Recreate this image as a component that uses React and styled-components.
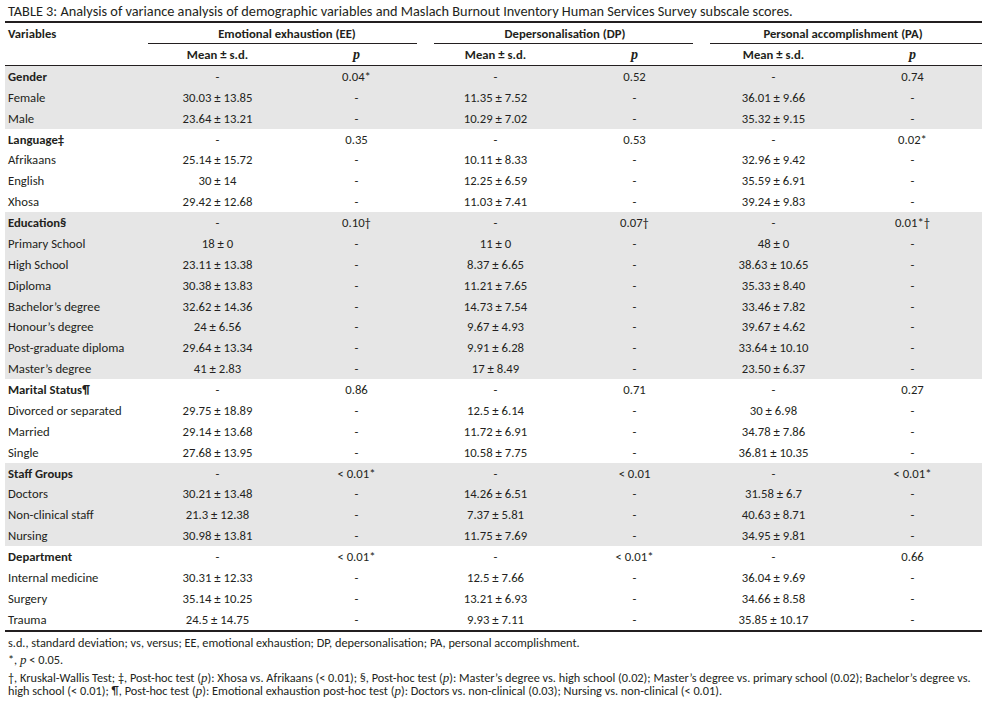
import styled, { createGlobalStyle } from 'styled-components';

const Global = createGlobalStyle`
  body {
    margin: 0;
    background: #fff;
    color: #231f20;
    font-family: Carlito, Lato, "Liberation Sans", sans-serif;
  }
`;

const COLS = '143px repeat(6, 139px)';

const Page = styled.div`
  width: 977px;
  margin-left: 5px;
  padding-top: 3px;
`;

const Title = styled.div`
  font-size: 14.3px;
  line-height: 17px;
  padding-left: 3px;
  padding-bottom: 1px;
  border-bottom: 2.5px solid #231f20;
  white-space: nowrap;
`;

const Row = styled.div`
  display: grid;
  grid-template-columns: ${COLS};
  height: ${(p) => p.h || 20.88}px;
  align-items: center;
  font-size: 12.7px;
  background: ${(p) => (p.shade ? '#e6e6e6' : 'transparent')};
  border-bottom: ${(p) => (p.rule ? '1px solid #231f20' : 'none')};
`;

const Cell = styled.div`
  text-align: ${(p) => (p.left ? 'left' : 'center')};
  padding-left: ${(p) => (p.left ? '3px' : '0')};
  font-weight: ${(p) => (p.bold ? 700 : 400)};
  white-space: nowrap;
`;

const GroupHead = styled.div`
  grid-column: span 2;
  align-self: stretch;
  display: flex;
  align-items: center;
  justify-content: center;
  font-weight: 700;
  position: relative;
  &::after {
    content: '';
    position: absolute;
    left: ${(p) => p.inL}px;
    right: ${(p) => p.inR}px;
    bottom: 0;
    border-bottom: 1px solid #231f20;
  }
`;

const PItalic = styled.span`
  font-family: "Liberation Serif", serif;
  font-style: italic;
  font-weight: 700;
  font-size: 14px;
`;

const Body = styled.div`
  border-bottom: 2.5px solid #231f20;
`;

const Notes = styled.div`
  font-size: 12.3px;
  padding: 4px 0 0 3px;
`;

const Note = styled.p`
  margin: 0 0 ${(p) => p.gap || 3}px;
  line-height: ${(p) => p.lh || 14}px;
`;

const Ip = styled.span`
  font-family: "Liberation Serif", serif;
  font-style: italic;
  font-size: 13px;
  line-height: 1;
`;

const groups = [
  {
    label: 'Gender',
    shade: true,
    p: ['0.04*', '0.52', '0.74'],
    rows: [
      ['Female', '30.03 ± 13.85', '11.35 ± 7.52', '36.01 ± 9.66'],
      ['Male', '23.64 ± 13.21', '10.29 ± 7.02', '35.32 ± 9.15'],
    ],
  },
  {
    label: 'Language‡',
    p: ['0.35', '0.53', '0.02*'],
    rows: [
      ['Afrikaans', '25.14 ± 15.72', '10.11 ± 8.33', '32.96 ± 9.42'],
      ['English', '30 ± 14', '12.25 ± 6.59', '35.59 ± 6.91'],
      ['Xhosa', '29.42 ± 12.68', '11.03 ± 7.41', '39.24 ± 9.83'],
    ],
  },
  {
    label: 'Education§',
    shade: true,
    p: ['0.10†', '0.07†', '0.01*†'],
    rows: [
      ['Primary School', '18 ± 0', '11 ± 0', '48 ± 0'],
      ['High School', '23.11 ± 13.38', '8.37 ± 6.65', '38.63 ± 10.65'],
      ['Diploma', '30.38 ± 13.83', '11.21 ± 7.65', '35.33 ± 8.40'],
      ['Bachelor’s degree', '32.62 ± 14.36', '14.73 ± 7.54', '33.46 ± 7.82'],
      ['Honour’s degree', '24 ± 6.56', '9.67 ± 4.93', '39.67 ± 4.62'],
      ['Post-graduate diploma', '29.64 ± 13.34', '9.91 ± 6.28', '33.64 ± 10.10'],
      ['Master’s degree', '41 ± 2.83', '17 ± 8.49', '23.50 ± 6.37'],
    ],
  },
  {
    label: 'Marital Status¶',
    p: ['0.86', '0.71', '0.27'],
    rows: [
      ['Divorced or separated', '29.75 ± 18.89', '12.5 ± 6.14', '30 ± 6.98'],
      ['Married', '29.14 ± 13.68', '11.72 ± 6.91', '34.78 ± 7.86'],
      ['Single', '27.68 ± 13.95', '10.58 ± 7.75', '36.81 ± 10.35'],
    ],
  },
  {
    label: 'Staff Groups',
    shade: true,
    p: ['< 0.01*', '< 0.01', '< 0.01*'],
    rows: [
      ['Doctors', '30.21 ± 13.48', '14.26 ± 6.51', '31.58 ± 6.7'],
      ['Non-clinical staff', '21.3 ± 12.38', '7.37 ± 5.81', '40.63 ± 8.71'],
      ['Nursing', '30.98 ± 13.81', '11.75 ± 7.69', '34.95 ± 9.81'],
    ],
  },
  {
    label: 'Department',
    p: ['< 0.01*', '< 0.01*', '0.66'],
    rows: [
      ['Internal medicine', '30.31 ± 12.33', '12.5 ± 7.66', '36.04 ± 9.69'],
      ['Surgery', '35.14 ± 10.25', '13.21 ± 6.93', '34.66 ± 8.58'],
      ['Trauma', '24.5 ± 14.75', '9.93 ± 7.11', '35.85 ± 10.17'],
    ],
  },
];

export default function App() {
  return (
    <Page>
      <Global />
      <Title>
        TABLE 3: Analysis of variance analysis of demographic variables and Maslach Burnout Inventory Human Services Survey subscale scores.
      </Title>
      <Row h={21}>
        <Cell left bold>Variables</Cell>
        <GroupHead inL={0} inR={9}>Emotional exhaustion (EE)</GroupHead>
        <GroupHead inL={8} inR={11}>Depersonalisation (DP)</GroupHead>
        <GroupHead inL={6} inR={0}>Personal accomplishment (PA)</GroupHead>
      </Row>
      <Row h={21} rule>
        <Cell />
        <Cell bold>Mean ± s.d.</Cell>
        <Cell><PItalic>p</PItalic></Cell>
        <Cell bold>Mean ± s.d.</Cell>
        <Cell><PItalic>p</PItalic></Cell>
        <Cell bold>Mean ± s.d.</Cell>
        <Cell><PItalic>p</PItalic></Cell>
      </Row>
      <Body>
        {groups.map((g) => (
          <div key={g.label}>
            <Row shade={g.shade}>
              <Cell left bold>{g.label}</Cell>
              <Cell>-</Cell>
              <Cell>{g.p[0]}</Cell>
              <Cell>-</Cell>
              <Cell>{g.p[1]}</Cell>
              <Cell>-</Cell>
              <Cell>{g.p[2]}</Cell>
            </Row>
            {g.rows.map((r) => (
              <Row shade={g.shade} key={r[0]}>
                <Cell left>{r[0]}</Cell>
                <Cell>{r[1]}</Cell>
                <Cell>-</Cell>
                <Cell>{r[2]}</Cell>
                <Cell>-</Cell>
                <Cell>{r[3]}</Cell>
                <Cell>-</Cell>
              </Row>
            ))}
          </div>
        ))}
      </Body>
      <Notes>
        <Note>s.d., standard deviation; vs, versus; EE, emotional exhaustion; DP, depersonalisation; PA, personal accomplishment.</Note>
        <Note gap={4}>*, <Ip>p</Ip> &lt; 0.05.</Note>
        <Note lh={13}>
          †, Kruskal-Wallis Test; ‡, Post-hoc test (<Ip>p</Ip>): Xhosa vs. Afrikaans (&lt; 0.01); §, Post-hoc test (<Ip>p</Ip>): Master’s degree vs. high school (0.02); Master’s degree vs. primary school (0.02); Bachelor’s degree vs. high school (&lt; 0.01); ¶, Post-hoc test (<Ip>p</Ip>): Emotional exhaustion post-hoc test (<Ip>p</Ip>): Doctors vs. non-clinical (0.03); Nursing vs. non-clinical (&lt; 0.01).
        </Note>
      </Notes>
    </Page>
  );
}
